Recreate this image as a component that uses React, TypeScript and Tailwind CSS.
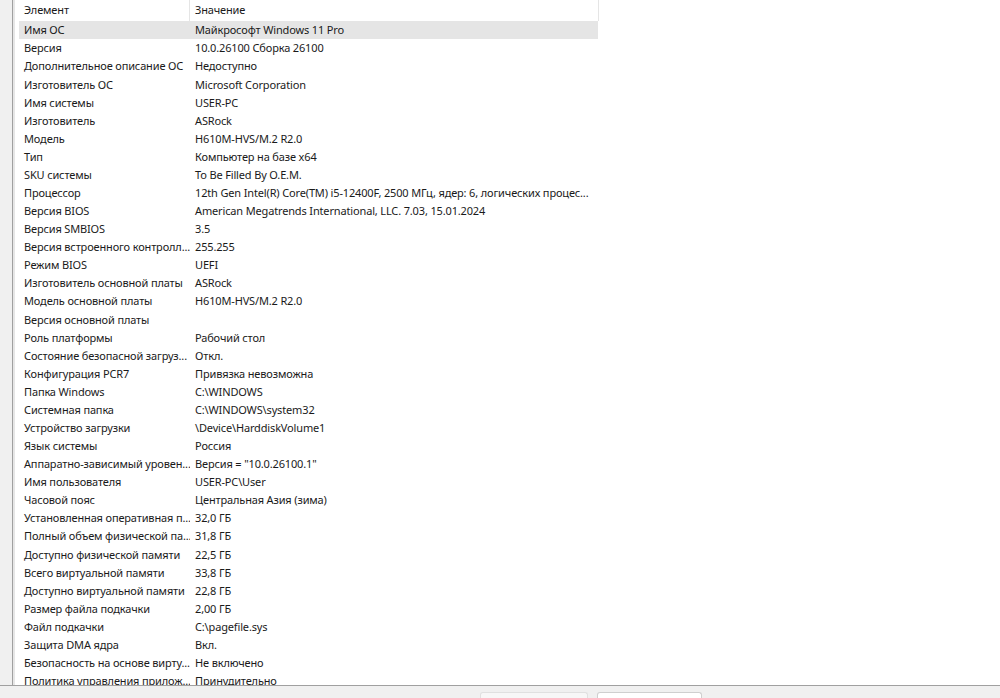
import React from 'react';

// Summary rows of the system information list
const ROWS: [string, string][] = [
  ['Имя ОС', 'Майкрософт Windows 11 Pro'],
  ['Версия', '10.0.26100 Сборка 26100'],
  ['Дополнительное описание ОС', 'Недоступно'],
  ['Изготовитель ОС', 'Microsoft Corporation'],
  ['Имя системы', 'USER-PC'],
  ['Изготовитель', 'ASRock'],
  ['Модель', 'H610M-HVS/M.2 R2.0'],
  ['Тип', 'Компьютер на базе x64'],
  ['SKU системы', 'To Be Filled By O.E.M.'],
  ['Процессор', '12th Gen Intel(R) Core(TM) i5-12400F, 2500 МГц, ядер: 6, логических процес...'],
  ['Версия BIOS', 'American Megatrends International, LLC. 7.03, 15.01.2024'],
  ['Версия SMBIOS', '3.5'],
  ['Версия встроенного контролл...', '255.255'],
  ['Режим BIOS', 'UEFI'],
  ['Изготовитель основной платы', 'ASRock'],
  ['Модель основной платы', 'H610M-HVS/M.2 R2.0'],
  ['Версия основной платы', ''],
  ['Роль платформы', 'Рабочий стол'],
  ['Состояние безопасной загруз...', 'Откл.'],
  ['Конфигурация PCR7', 'Привязка невозможна'],
  ['Папка Windows', 'C:\\WINDOWS'],
  ['Системная папка', 'C:\\WINDOWS\\system32'],
  ['Устройство загрузки', '\\Device\\HarddiskVolume1'],
  ['Язык системы', 'Россия'],
  ['Аппаратно-зависимый уровен...', 'Версия = "10.0.26100.1"'],
  ['Имя пользователя', 'USER-PC\\User'],
  ['Часовой пояс', 'Центральная Азия (зима)'],
  ['Установленная оперативная п...', '32,0 ГБ'],
  ['Полный объем физической па...', '31,8 ГБ'],
  ['Доступно физической памяти', '22,5 ГБ'],
  ['Всего виртуальной памяти', '33,8 ГБ'],
  ['Доступно виртуальной памяти', '22,8 ГБ'],
  ['Размер файла подкачки', '2,00 ГБ'],
  ['Файл подкачки', 'C:\\pagefile.sys'],
  ['Защита DMA ядра', 'Вкл.'],
  ['Безопасность на основе вирту...', 'Не включено'],
  ['Политика управления прилож...', 'Принудительно'],
];

export default function App() {
  return (
    <div
      className="w-[1000px] h-[698px] flex flex-col bg-[#f0f0f0] overflow-hidden text-[11px] tracking-[-0.15px] text-[#1a1a1a]"
      style={{ fontFamily: '"Noto Sans", "Open Sans", sans-serif' }}
    >
      <div className="flex flex-1 min-h-0">
        <div className="w-[12px] shrink-0" />
        {/* List view */}
        <div className="flex-1 flex bg-white border-l border-[#a0a0a0] overflow-hidden">
          <div className="w-[2px] shrink-0 bg-[#e6e6e6]" />
          <div className="flex flex-col pl-[4px] overflow-hidden">
            {/* Header */}
            <div className="flex h-[21px] shrink-0 items-center w-[580px] border-r border-[#e5e5e5]">
              <div className="w-[171px] h-full flex items-center pl-[5px] border-r border-[#e5e5e5]">Элемент</div>
              <div className="flex-1 pl-[5px]">Значение</div>
            </div>
            {/* Rows */}
            {ROWS.map(([name, value], i) => (
              <div
                key={i}
                className={`flex h-[18.08px] shrink-0 items-center w-[579px] whitespace-nowrap pt-[1px] ${
                  i === 0 ? 'bg-[#e5e5e5]' : ''
                }`}
              >
                <div className="w-[171px] pl-[5px] overflow-hidden">{name}</div>
                <div className="flex-1 pl-[5px] overflow-hidden">{value}</div>
              </div>
            ))}
          </div>
        </div>
      </div>
      {/* Bottom bar with tabs */}
      <div className="h-[13px] shrink-0 border-t border-[#a0a0a0] flex items-end gap-[9px] pl-[480px]">
        <div className="w-[108px] h-[6px] rounded-t-[3px] border border-b-0 border-[#e0e0e0] bg-[#f7f7f7]" />
        <div className="w-[105px] h-[6px] rounded-t-[3px] border border-b-0 border-[#cfcfcf] bg-white" />
      </div>
    </div>
  );
}
